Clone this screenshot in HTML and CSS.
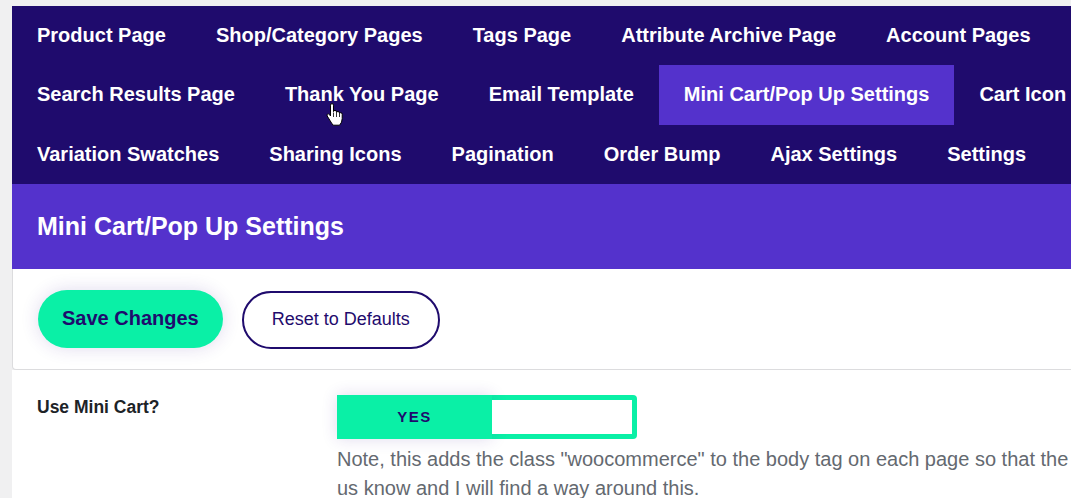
FILE: index.html
```html
<!DOCTYPE html>
<html lang="en">
<head>
<meta charset="utf-8">
<title>Mini Cart/Pop Up Settings</title>
<link rel="stylesheet" href="styles.css">
</head>
<body>
<div class="wrap">
  <nav class="tabs">
    <ul class="tab-list">
      <li><a class="tab" href="#">Product Page</a></li>
      <li><a class="tab" href="#">Shop/Category Pages</a></li>
      <li><a class="tab" href="#">Tags Page</a></li>
      <li><a class="tab" href="#">Attribute Archive Page</a></li>
      <li><a class="tab" href="#">Account Pages</a></li>
      <li><a class="tab" href="#">Search Results Page</a></li>
      <li><a class="tab hover" href="#">Thank You Page<svg class="cursor" width="17" height="23" viewBox="0 0 17 23"><path d="M4.5 2.2Q4.5 0.6 6 0.6Q7.5 0.6 7.5 2.2V8.6Q7.6 7.4 9 7.4Q10.4 7.4 10.5 8.9V9.6Q10.6 8.5 12 8.5Q13.4 8.5 13.5 10V10.6Q13.6 9.7 14.6 9.7Q16.2 9.7 16.2 11.2V15.6Q16.2 19.4 13.6 22.2H7.2Q5.6 20.4 3.8 17.2L1.2 13Q0.6 11.6 1.7 11Q2.9 10.5 3.8 11.9L4.5 13Z" fill="#fff" stroke="#000" stroke-width="1" stroke-linejoin="round"/><path d="M7.5 9.5V14M10.5 10V14M13.5 11V14" stroke="#000" stroke-width="0.8" fill="none"/></svg></a></li>
      <li><a class="tab" href="#">Email Template</a></li>
      <li><a class="tab active" href="#">Mini Cart/Pop Up Settings</a></li>
      <li><a class="tab" href="#">Cart Icon</a></li>
      <li><a class="tab" href="#">Variation Swatches</a></li>
      <li><a class="tab" href="#">Sharing Icons</a></li>
      <li><a class="tab" href="#">Pagination</a></li>
      <li><a class="tab" href="#">Order Bump</a></li>
      <li><a class="tab" href="#">Ajax Settings</a></li>
      <li><a class="tab" href="#">Settings</a></li>
    </ul>
  </nav>
  <div class="panel-head">
    <h2 class="panel-title">Mini Cart/Pop Up Settings</h2>
  </div>
  <div class="actions">
    <button class="btn btn-save" type="button">Save Changes</button>
    <button class="btn btn-reset" type="button">Reset to Defaults</button>
  </div>
  <div class="settings">
    <div class="setting-row">
      <div class="setting-label">Use Mini Cart?</div>
      <div class="setting-field">
        <div class="toggle">
          <span class="toggle-on">YES</span>
          <span class="toggle-off"></span>
        </div>
        <p class="note">Note, this adds the class "woocommerce" to the body tag on each page so that the<br>us know and I will find a way around this.</p>
      </div>
    </div>
  </div>
</div>
</body>
</html>
```

FILE: styles.css
```css
html, body {
  margin: 0;
  padding: 0;
  overflow: hidden;
}
body {
  background: #f0f0f1;
  font-family: "Liberation Sans", Arial, sans-serif;
}
.wrap {
  width: 1160px;
  margin: 6px 0 0 12px;
}
.tabs {
  background: #1f0b6d;
}
.tab-list {
  list-style: none;
  margin: 0;
  padding: 0;
  display: flex;
  flex-wrap: wrap;
}
.tab {
  display: block;
  position: relative;
  padding: 18px 25px 18px;
  line-height: 23.33px;
  font-size: 20px;
  font-weight: bold;
  color: #fff;
  text-decoration: none;
}
.tab.active {
  background: #5432cc;
}
.cursor {
  position: absolute;
  left: 66px;
  top: 38px;
}
.panel-head {
  background: #5432cc;
  padding: 28px 25px;
}
.panel-title {
  margin: 0;
  font-size: 25px;
  line-height: 29px;
  font-weight: bold;
  color: #fff;
}
.actions {
  background: #fff;
  border: 1px solid #dcdcde;
  border-top: none;
  border-radius: 0 0 4px 4px;
  padding: 20px 25px;
  display: flex;
  align-items: center;
  gap: 19px;
}
.btn {
  height: 58px;
  border-radius: 29px;
  font-family: "Liberation Sans", Arial, sans-serif;
  cursor: pointer;
}
.btn-save {
  background: #0af0a6;
  border: none;
  padding: 0 24px;
  font-size: 20px;
  font-weight: bold;
  color: #1f0b6d;
  box-shadow: 0 0 18px rgba(60, 30, 150, 0.16);
}
.btn-reset {
  background: #fff;
  border: 2px solid #1f0b6d;
  padding: 0 28px;
  font-size: 18px;
  color: #1f0b6d;
  margin-top: 2px;
}
.settings {
  background: #fff;
  padding: 25px 25px 40px;
}
.setting-row {
  display: flex;
}
.setting-label {
  flex: 0 0 300px;
  padding-top: 2px;
  font-size: 17.5px;
  font-weight: bold;
  color: #1d2327;
}
.setting-field {
  flex: 1;
}
.toggle {
  width: 300px;
  height: 44px;
  background: #0af0a6;
  border-radius: 0 4px 4px 0;
  display: flex;
}
.toggle-on {
  flex: 0 0 155px;
  display: flex;
  align-items: center;
  justify-content: center;
  font-size: 15px;
  font-weight: bold;
  letter-spacing: 1.5px;
  color: #1f0b6d;
  box-shadow: 0 0 16px rgba(60, 30, 150, 0.16);
}
.toggle-off {
  flex: 1;
  background: #fff;
  margin: 5px 5px 5px 0;
}
.note {
  margin: 6px 0 0;
  font-size: 20px;
  line-height: 29px;
  color: #646970;
  white-space: nowrap;
}
```
